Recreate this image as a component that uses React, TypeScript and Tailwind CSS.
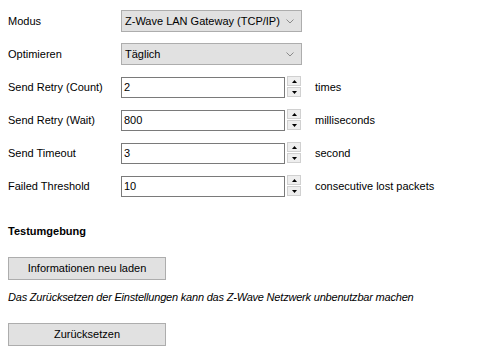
import React from "react";

const chevron = (
  <svg width="8" height="5" viewBox="0 0 8 5" className="text-[#8a8a8a]">
    <path d="M0.5 0.5 L4 4 L7.5 0.5" fill="none" stroke="currentColor" strokeWidth="1" />
  </svg>
);

function SelectRow({ label, value }: { label: string; value: string }) {
  return (
    <div className="flex h-[22px] items-center">
      <div className="w-[113px]">{label}</div>
      <div className="flex h-[22px] w-[181px] items-center justify-between border border-[#adadad] bg-[#e1e1e1] pl-[3px] pr-[7px]">
        <span>{value}</span>
        {chevron}
      </div>
    </div>
  );
}

function SpinRow({ label, value, unit }: { label: string; value: string; unit: string }) {
  return (
    <div className="flex h-[22px] items-center">
      <div className="w-[113px]">{label}</div>
      <div className="flex h-[21px] w-[164px] items-center border border-[#7a7a7a] bg-white pl-[2px]">
        {value}
      </div>
      <div className="ml-[2px] flex h-[22px] w-[14px] flex-col gap-[1px]">
        <div className="flex h-[10px] items-center justify-center border border-[#d0d0d0] bg-[#eeeeee]">
          <svg width="5" height="3" viewBox="0 0 5 3">
            <path d="M0 3 L2.5 0 L5 3 Z" fill="#000" />
          </svg>
        </div>
        <div className="flex h-[10px] items-center justify-center border border-[#d0d0d0] bg-[#eeeeee]">
          <svg width="5" height="3" viewBox="0 0 5 3">
            <path d="M0 0 L2.5 3 L5 0 Z" fill="#000" />
          </svg>
        </div>
      </div>
      <div className="ml-[14px]">{unit}</div>
    </div>
  );
}

export default function App() {
  return (
    <div className="min-h-[358px] w-[486px] bg-white pl-2 pt-[10px] font-['Liberation_Sans',Arial,sans-serif] text-[11px] text-black">
      <div className="flex flex-col gap-[11px]">
        <SelectRow label="Modus" value="Z-Wave LAN Gateway (TCP/IP)" />
        <SelectRow label="Optimieren" value="Täglich" />
        <SpinRow label="Send Retry (Count)" value="2" unit="times" />
        <SpinRow label="Send Retry (Wait)" value="800" unit="milliseconds" />
        <SpinRow label="Send Timeout" value="3" unit="second" />
        <SpinRow label="Failed Threshold" value="10" unit="consecutive lost packets" />
      </div>
      <h3 className="mt-[27px] leading-[14px] font-bold">Testumgebung</h3>
      <button className="mt-[19px] flex h-[23px] w-[158px] items-center justify-center border border-[#adadad] bg-[#e1e1e1]">
        Informationen neu laden
      </button>
      <p className="mt-[10px] leading-[14px] italic tracking-[-0.2px]">
        Das Zurücksetzen der Einstellungen kann das Z-Wave Netzwerk unbenutzbar machen
      </p>
      <button className="mt-[19px] flex h-[23px] w-[158px] items-center justify-center border border-[#adadad] bg-[#e1e1e1]">
        Zurücksetzen
      </button>
    </div>
  );
}
